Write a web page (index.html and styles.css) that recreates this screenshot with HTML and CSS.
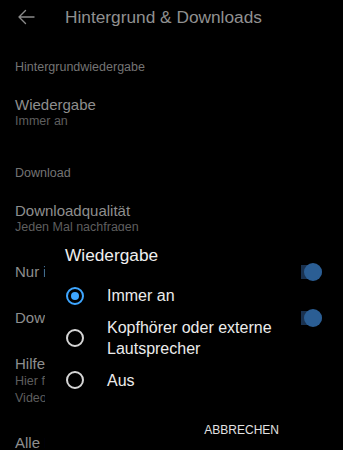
FILE: index.html
```html
<!DOCTYPE html>
<html lang="de">
<head>
<meta charset="utf-8">
<title>Hintergrund &amp; Downloads</title>
<link rel="stylesheet" href="styles.css">
</head>
<body>
<div class="screen">
  <header class="topbar">
    <svg class="back" width="18" height="16" viewBox="0 0 18 16" aria-hidden="true">
      <path d="M17 8H2M8.5 1.5L2 8l6.5 6.5" fill="none" stroke="#8a8a8a" stroke-width="1.4" stroke-linecap="round" stroke-linejoin="round"/>
    </svg>
    <h1 class="title">Hintergrund &amp; Downloads</h1>
  </header>

  <main class="list">
    <div class="section-title">Hintergrundwiedergabe</div>
    <div class="item">
      <div class="item-title">Wiedergabe</div>
      <div class="item-sub">Immer an</div>
    </div>

    <div class="section-title">Download</div>
    <div class="item">
      <div class="item-title">Downloadqualität</div>
      <div class="item-sub">Jeden Mal nachfragen</div>
    </div>
    <div class="item toggle-item">
      <div class="item-title">Nur im WLAN herunterladen</div>
      <span class="switch"><span class="thumb"></span></span>
    </div>
    <div class="item toggle-item">
      <div class="item-title">Downloads empfehlen</div>
      <span class="switch"><span class="thumb"></span></span>
    </div>
    <div class="item">
      <div class="item-title">Hilfe</div>
      <div class="item-sub tall">Hier findest du Informationen zu heruntergeladenen</div>
      <div class="item-sub tall">Videos und Playlists</div>
    </div>
    <div class="item">
      <div class="item-title">Alle Downloads löschen</div>
    </div>
  </main>

  <div class="dialog" role="dialog">
    <div class="dialog-title">Wiedergabe</div>
    <div class="options">
      <div class="option">
        <span class="radio checked"></span>
        <span class="option-label">Immer an</span>
      </div>
      <div class="option">
        <span class="radio"></span>
        <span class="option-label">Kopfhörer oder externe Lautsprecher</span>
      </div>
      <div class="option">
        <span class="radio"></span>
        <span class="option-label">Aus</span>
      </div>
    </div>
    <div class="actions">
      <span class="btn">ABBRECHEN</span>
    </div>
  </div>
</div>
</body>
</html>
```

FILE: styles.css
```css
* {
  box-sizing: border-box;
}

html, body {
  margin: 0;
  padding: 0;
  background: #000;
}

body {
  font-family: "Liberation Sans", Arial, sans-serif;
}

.screen {
  position: relative;
  width: 343px;
  height: 450px;
  overflow: hidden;
  background: #000;
}

.topbar {
  display: flex;
  align-items: flex-start;
  height: 46px;
  padding: 5px 0 0 17px;
}

.back {
  margin-top: 4px;
}

.title {
  margin: 0 0 0 30px;
  font-size: 17.3px;
  line-height: 24px;
  font-weight: normal;
  color: #909090;
}

.list {
  padding: 0 21px 0 15px;
}

.section-title {
  margin-top: 36px;
  font-size: 12.5px;
  line-height: 16px;
  color: #747474;
}

.section-title:first-child {
  margin-top: 13px;
}

.item {
  margin-top: 28px;
}

.section-title + .item {
  margin-top: 21px;
}

.item-title {
  font-size: 15px;
  line-height: 18px;
  color: #8e8e8e;
  white-space: nowrap;
}

.item-sub {
  font-size: 12.5px;
  line-height: 15px;
  color: #5e5e5e;
  white-space: nowrap;
}

.item-sub.tall {
  line-height: 16.5px;
}

.toggle-item {
  display: flex;
  align-items: center;
  justify-content: space-between;
}

.switch {
  position: relative;
  flex: none;
  width: 34px;
  height: 14px;
  border-radius: 7px;
  background: #1a3250;
}

.thumb {
  position: absolute;
  right: 0;
  top: -2px;
  width: 18px;
  height: 18px;
  border-radius: 50%;
  background: #2b5e94;
}

.dialog {
  position: absolute;
  left: 45px;
  top: 231px;
  width: 256px;
  height: 240px;
  background: #000;
  padding: 12px 22px 0 20px;
}

.dialog-title {
  font-size: 17.3px;
  line-height: 24px;
  color: #efefef;
}

.options {
  margin-top: 13px;
}

.option {
  display: flex;
  align-items: center;
  padding: 5px 0;
}

.radio {
  flex: none;
  width: 18px;
  height: 18px;
  margin-left: 1px;
  border: 2px solid #d6d6d6;
  border-radius: 50%;
  display: flex;
  align-items: center;
  justify-content: center;
}

.radio.checked {
  border-color: #3ea6ff;
}

.radio.checked::after {
  content: "";
  width: 8px;
  height: 8px;
  border-radius: 50%;
  background: #3ea6ff;
}

.option-label {
  margin-left: 23px;
  font-size: 16px;
  line-height: 21.5px;
  color: #ececec;
}

.actions {
  display: flex;
  justify-content: flex-end;
  margin-top: 25.5px;
}

.btn {
  font-size: 12px;
  line-height: 16px;
  color: #e2e2e2;
}
```
